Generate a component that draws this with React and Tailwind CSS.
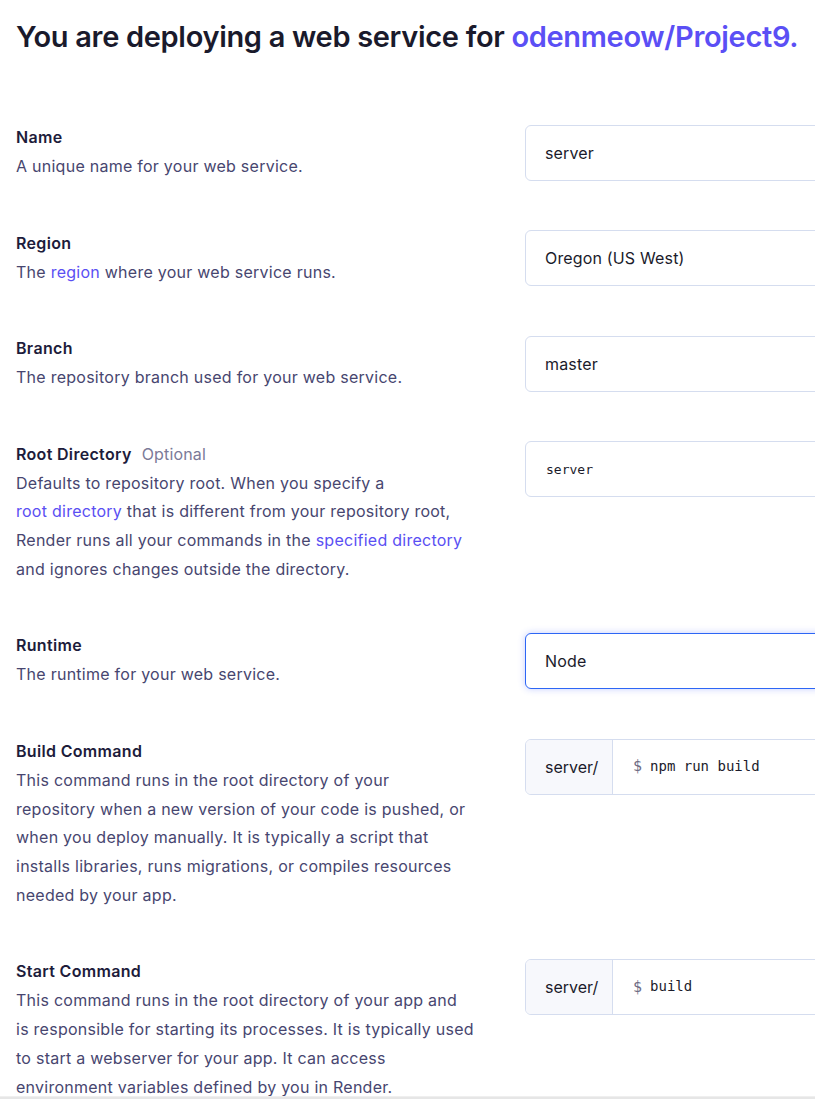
import React from "react";

const label = "text-[16px] leading-[29px] font-semibold tracking-[0.02em] text-[#1d1c3b]";
const desc = "text-[16px] leading-[28.7px] tracking-[0.016em] text-[#47466f]";
const link = "text-[#5a4ff3]";
const box = "h-14 w-[420px] rounded-md border border-[#d5ddef] bg-white flex items-center";

const Field = ({ title, optional, children, input }) => (
  <div className="flex items-start pb-[47.9px]">
    <div className="w-[509px] shrink-0">
      <div className={label}>
        {title}
        {optional && <span className="ml-2.5 font-normal tracking-[0.01em] text-[#7b7a98]">{optional}</span>}
      </div>
      <div className={desc}>{children}</div>
    </div>
    <div className="mt-[1.5px] shrink-0">{input}</div>
  </div>
);

const TextBox = ({ value, mono, focus }) => (
  <div
    className={
      focus
        ? "h-14 w-[420px] rounded-md border border-[#2d66f5] bg-white flex items-center shadow-[0_0_7px_rgba(60,90,255,0.3)]"
        : box
    }
  >
    <span
      className={
        mono
          ? "pl-5 text-[13px] text-[#1b1b2b] font-['DejaVu_Sans_Mono',monospace]"
          : "pl-[19px] text-[16px] tracking-[0.01em] text-[#1b1b2b]"
      }
    >
      {value}
    </span>
  </div>
);

const CommandBox = ({ cmd }) => (
  <div className={box + " overflow-hidden"}>
    <div className="h-full w-[87px] shrink-0 bg-[#f7f8fc] border-r border-[#d5ddef] flex items-center pl-[19px] text-[16px] text-[#1b1b2b]">
      server/
    </div>
    <div className="pl-5 flex items-center text-[14px] font-['DejaVu_Sans_Mono',monospace] text-[#1b1b2b]">
      <span className="text-[#6e6d84] mr-2 text-[15px]">$</span>
      {cmd}
    </div>
  </div>
);

export default function App() {
  return (
    <div className="h-[1099px] w-[815px] overflow-hidden bg-white flex flex-col font-['Inter',sans-serif]">
      <div className="flex-1 overflow-hidden pl-4">
        <h1 className="pt-[17px] text-[29px] leading-[40px] font-semibold tracking-[-0.011em] text-[#1a1a2c] whitespace-nowrap">
          You are deploying a web service for <span className="text-[#5b4ff5]">odenmeow/Project9.</span>
        </h1>
        <div className="pt-[66px]">
          <Field title="Name" input={<TextBox value="server" />}>
            A unique name for your web service.
          </Field>
          <Field title="Region" input={<TextBox value="Oregon (US West)" />}>
            The <span className={link}>region</span> where your web service runs.
          </Field>
          <Field title="Branch" input={<TextBox value="master" />}>
            The repository branch used for your web service.
          </Field>
          <Field title="Root Directory" optional="Optional" input={<TextBox value="server" mono />}>
            Defaults to repository root. When you specify a
            <br />
            <span className={link}>root directory</span> that is different from your repository root,
            <br />
            Render runs all your commands in the <span className={link}>specified directory</span>
            <br />
            and ignores changes outside the directory.
          </Field>
          <Field title="Runtime" input={<TextBox value="Node" focus />}>
            The runtime for your web service.
          </Field>
          <Field title="Build Command" input={<CommandBox cmd="npm run build" />}>
            This command runs in the root directory of your
            <br />
            repository when a new version of your code is pushed, or
            <br />
            when you deploy manually. It is typically a script that
            <br />
            installs libraries, runs migrations, or compiles resources
            <br />
            needed by your app.
          </Field>
          <Field title="Start Command" input={<CommandBox cmd="build" />}>
            This command runs in the root directory of your app and
            <br />
            is responsible for starting its processes. It is typically used
            <br />
            to start a webserver for your app. It can access
            <br />
            environment variables defined by you in Render.
          </Field>
        </div>
      </div>
      <div className="h-[3px] bg-[#e6e6e6] border-t border-[#efefef]" />
    </div>
  );
}
